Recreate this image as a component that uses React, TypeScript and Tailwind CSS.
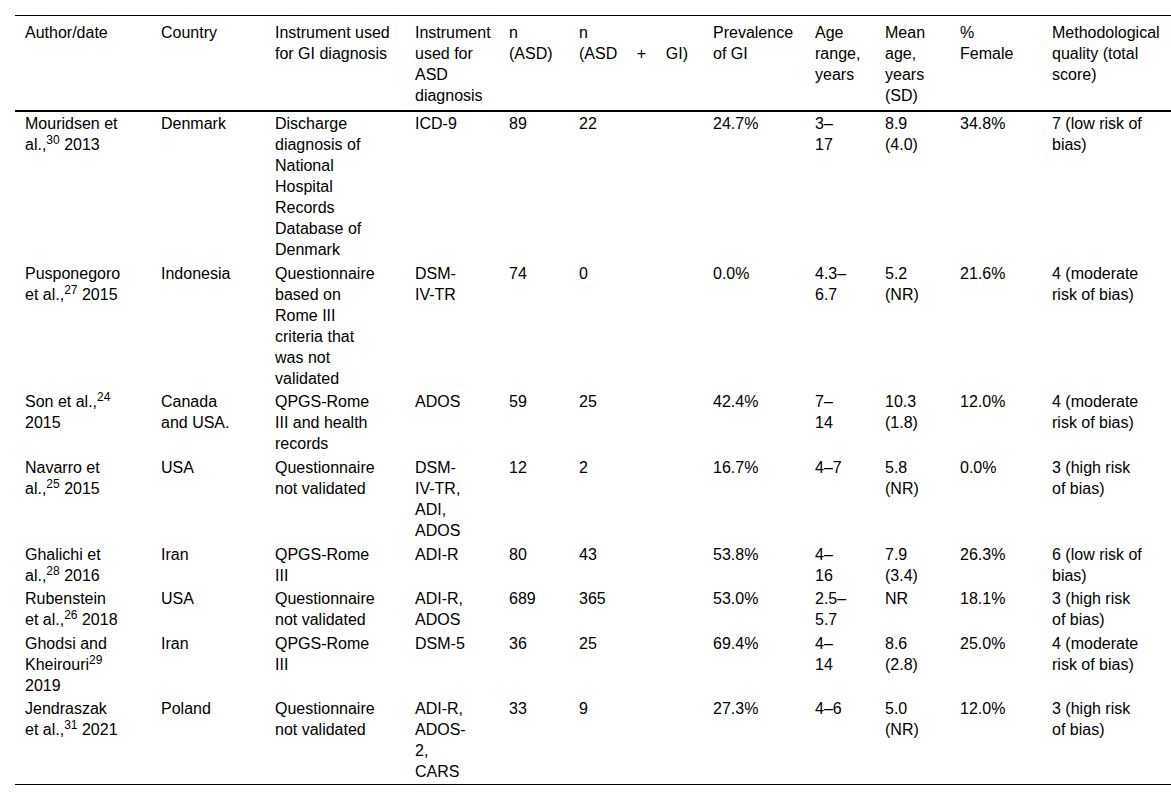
const cols = [
  { w: "w-[146px]", pl: "pl-[10px]", head: "w-[100px]", body: "w-[97px]" },
  { w: "w-[114px]", pl: "", head: "w-[90px]", body: "w-[80px]" },
  { w: "w-[140px]", pl: "", head: "w-[120px]", body: "w-[105px]" },
  { w: "w-[94px]", pl: "", head: "w-[85px]", body: "w-[56px]" },
  { w: "w-[70px]", pl: "", head: "w-[50px]", body: "w-[60px]" },
  { w: "w-[134px]", pl: "", head: "w-[109px]", body: "w-[100px]" },
  { w: "w-[102px]", pl: "", head: "w-[88px]", body: "w-[90px]" },
  { w: "w-[70px]", pl: "", head: "w-[60px]", body: "w-[33px]" },
  { w: "w-[75px]", pl: "", head: "w-[55px]", body: "w-[45px]" },
  { w: "w-[92px]", pl: "", head: "w-[60px]", body: "w-[80px]" },
  { w: "w-[119px]", pl: "", head: "w-[115px]", body: "w-[92px]" },
];

type Row = {
  author: React.ReactNode;
  cells: string[];
};

const rows: Row[] = [
  {
    author: (
      <>
        Mouridsen et al.,<sup>30</sup> 2013
      </>
    ),
    cells: [
      "Denmark",
      "Discharge diagnosis of National Hospital Records Database of Denmark",
      "ICD-9",
      "89",
      "22",
      "24.7%",
      "3–17",
      "8.9 (4.0)",
      "34.8%",
      "7 (low risk of bias)",
    ],
  },
  {
    author: (
      <>
        Pusponegoro et al.,<sup>27</sup> 2015
      </>
    ),
    cells: [
      "Indonesia",
      "Questionnaire based on Rome III criteria that was not validated",
      "DSM-IV-TR",
      "74",
      "0",
      "0.0%",
      "4.3–6.7",
      "5.2 (NR)",
      "21.6%",
      "4 (moderate risk of bias)",
    ],
  },
  {
    author: (
      <>
        Son et al.,<sup>24</sup> 2015
      </>
    ),
    cells: [
      "Canada and USA.",
      "QPGS-Rome III and health records",
      "ADOS",
      "59",
      "25",
      "42.4%",
      "7–14",
      "10.3 (1.8)",
      "12.0%",
      "4 (moderate risk of bias)",
    ],
  },
  {
    author: (
      <>
        Navarro et al.,<sup>25</sup> 2015
      </>
    ),
    cells: [
      "USA",
      "Questionnaire not validated",
      "DSM-IV-TR, ADI, ADOS",
      "12",
      "2",
      "16.7%",
      "4–7",
      "5.8 (NR)",
      "0.0%",
      "3 (high risk of bias)",
    ],
  },
  {
    author: (
      <>
        Ghalichi et al.,<sup>28</sup> 2016
      </>
    ),
    cells: [
      "Iran",
      "QPGS-Rome III",
      "ADI-R",
      "80",
      "43",
      "53.8%",
      "4–16",
      "7.9 (3.4)",
      "26.3%",
      "6 (low risk of bias)",
    ],
  },
  {
    author: (
      <>
        Rubenstein et al.,<sup>26</sup> 2018
      </>
    ),
    cells: [
      "USA",
      "Questionnaire not validated",
      "ADI-R, ADOS",
      "689",
      "365",
      "53.0%",
      "2.5–5.7",
      "NR",
      "18.1%",
      "3 (high risk of bias)",
    ],
  },
  {
    author: (
      <>
        Ghodsi and Kheirouri<sup>29</sup> 2019
      </>
    ),
    cells: [
      "Iran",
      "QPGS-Rome III",
      "DSM-5",
      "36",
      "25",
      "69.4%",
      "4–14",
      "8.6 (2.8)",
      "25.0%",
      "4 (moderate risk of bias)",
    ],
  },
  {
    author: (
      <>
        Jendraszak et al.,<sup>31</sup> 2021
      </>
    ),
    cells: [
      "Poland",
      "Questionnaire not validated",
      "ADI-R, ADOS-2, CARS",
      "33",
      "9",
      "27.3%",
      "4–6",
      "5.0 (NR)",
      "12.0%",
      "3 (high risk of bias)",
    ],
  },
];

const headers: React.ReactNode[] = [
  "Author/date",
  "Country",
  "Instrument used for GI diagnosis",
  "Instrument used for ASD diagnosis",
  "n (ASD)",
  <>
    <div>n</div>
    <div className="flex justify-between">
      <span>(ASD</span>
      <span>+</span>
      <span>GI)</span>
    </div>
  </>,
  "Prevalence of GI",
  "Age range, years",
  "Mean age, years (SD)",
  "% Female",
  "Methodological quality (total score)",
];

export default function App() {
  return (
    <div className="min-h-screen bg-white pl-[15px] pt-[15px] font-['Liberation_Sans',Arial,sans-serif] text-[16px] leading-[21px] text-black">
      <table className="w-[1156px] table-fixed border-separate border-spacing-0">
        <colgroup>
          {cols.map((c, i) => (
            <col key={i} className={c.w} />
          ))}
        </colgroup>
        <thead>
          <tr>
            {headers.map((h, i) => (
              <th
                key={i}
                className={`border-t border-b-2 border-black pt-[6px] pb-[4px] text-left align-top font-normal ${cols[i].pl}`}
              >
                <div className={cols[i].head}>{h}</div>
              </th>
            ))}
          </tr>
        </thead>
        <tbody>
          {rows.map((r, ri) => {
            const last = ri === rows.length - 1;
            return (
              <tr key={ri}>
                {[r.author, ...r.cells].map((c, ci) => (
                  <td
                    key={ci}
                    className={`py-[1.3px] text-left align-top ${cols[ci].pl} ${
                      last ? "border-b border-black" : ""
                    }`}
                  >
                    <div className={cols[ci].body}>{c}</div>
                  </td>
                ))}
              </tr>
            );
          })}
        </tbody>
      </table>
    </div>
  );
}
